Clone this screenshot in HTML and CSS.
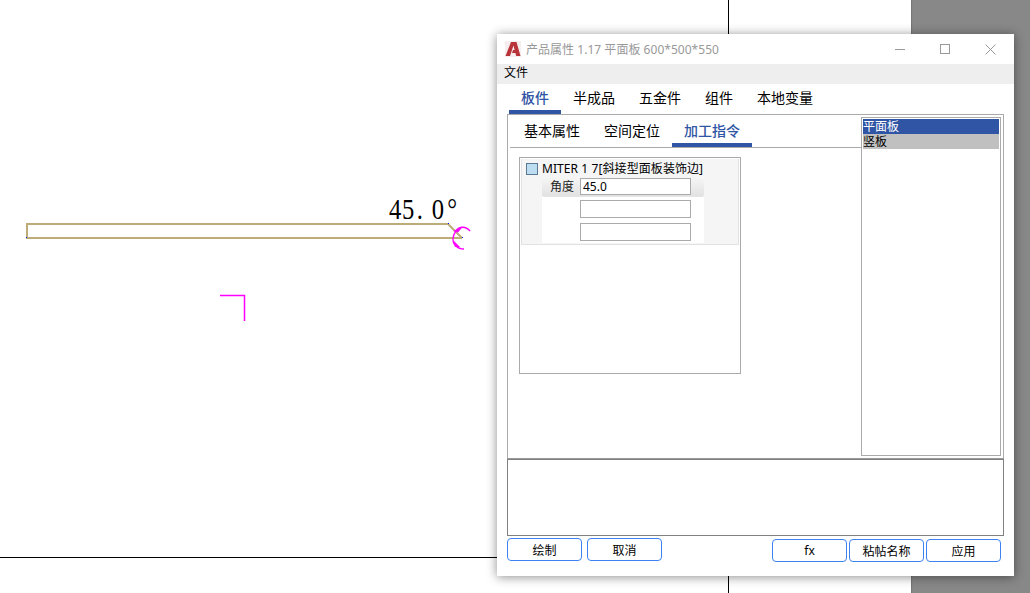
FILE: index.html
```html
<!DOCTYPE html>
<html>
<head>
<meta charset="utf-8">
<title>产品属性</title>
<link rel="stylesheet" href="styles.css">
</head>
<body>
<div class="desktop">
	<svg class="drawing" width="911" height="593" viewBox="0 0 911 593">
		<line x1="728.5" y1="0" x2="728.5" y2="593" stroke="#000"/>
		<line x1="0" y1="557.5" x2="911" y2="557.5" stroke="#000"/>
		<path d="M448 224H27V238H462M448 224L462 238" fill="none" stroke="#bdac78" stroke-width="2"/>
		<rect x="26" y="237" width="1" height="1" fill="#00f"/>
		<rect x="448" y="223" width="1" height="1" fill="#00f"/>
		<rect x="462" y="237" width="1" height="1" fill="#00f"/>
		<text class="dim" transform="translate(389 219) scale(.82 1)" x="0 16 34 52 71" y="0">45.0°</text>
		<path d="M470 231C466 226 459 226 456 231C452 236 452 243 456 246C458 248 461 249 464 249" fill="none" stroke="#f0f" stroke-width="1.300"/>
		<path d="M463 226.500L453 231L458 232.500ZM453 240L460 247L455 247Z" fill="#f0f"/>
		<path d="M220 295.500H244.500V321" fill="none" stroke="#f0f" stroke-width="1.500"/>
	</svg>
	<div class="dialog">
		<div class="titlebar">
			<svg class="logo" width="16" height="16" viewBox="0 0 16 16">
				<rect width="16" height="16" fill="#f6eeee"/>
				<path d="M6 1H11.500L15.500 15H11.200L10.400 12H7L8 9H9.600L8.500 4.500L5 15H0.500Z" fill="#b9343a"/>
			</svg>
			<span class="title">产品属性 1.17 平面板 600*500*550</span>
			<div class="winbtns">
				<svg width="10" height="10" viewBox="0 0 10 10"><line x1="0" y1="5.500" x2="10" y2="5.500" stroke="#999"/></svg>
				<svg width="10" height="10" viewBox="0 0 10 10"><rect x="0.500" y="0.500" width="9" height="9" fill="none" stroke="#999"/></svg>
				<svg width="11" height="11" viewBox="0 0 11 11"><path d="M0.500 0.500L10.500 10.500M10.500 0.500L0.500 10.500" stroke="#999" fill="none"/></svg>
			</div>
		</div>
		<div class="menubar">文件</div>
		<div class="tabs">
			<span class="tab active">板件</span>
			<span class="tab">半成品</span>
			<span class="tab">五金件</span>
			<span class="tab">组件</span>
			<span class="tab">本地变量</span>
		</div>
		<div class="panel">
			<div class="left">
				<div class="subtabs">
					<span class="tab">基本属性</span>
					<span class="tab">空间定位</span>
					<span class="tab active">加工指令</span>
				</div>
				<div class="tree">
					<div class="group">
						<div class="group-head"><i class="check"></i>MITER 1 7[斜接型面板装饰边]</div>
						<div class="params">
							<div class="param first"><label>角度</label><input type="text" value="45.0"></div>
							<div class="param"><label></label><input type="text"></div>
							<div class="param"><label></label><input type="text"></div>
						</div>
					</div>
				</div>
			</div>
			<ul class="list">
				<li class="sel">平面板</li>
				<li class="alt">竖板</li>
			</ul>
		</div>
		<div class="output"></div>
		<div class="buttons">
			<button>绘制</button>
			<button>取消</button>
			<span class="spacer"></span>
			<button class="low">fx</button>
			<button class="low">粘帖名称</button>
			<button class="low">应用</button>
		</div>
	</div>
</div>
</body>
</html>
```

FILE: styles.css
```css
* { margin: 0; padding: 0; box-sizing: border-box; }
html, body { width: 1030px; height: 593px; overflow: hidden; }
body { font-family: "Noto Sans", "Noto Sans CJK SC", sans-serif; font-size: 12px; color: #000; }

.desktop { position: relative; width: 1030px; height: 593px; background: #888; }
.drawing { position: absolute; left: 0; top: 0; background: #fff; box-shadow: 1px 0 1px #777; }
.dim { font-family: "Liberation Serif", serif; font-size: 30px; fill: #000; }

.dialog { position: absolute; left: 497px; top: 34px; width: 517px; height: 542px; background: #fff; display: flex; flex-direction: column; box-shadow: 0 1px 10px rgba(0,0,0,.45); }

.titlebar { height: 30px; display: flex; align-items: center; padding-left: 8px; }
.logo { margin-right: 5px; }
.title { color: #999; font-size: 12px; flex: 1; letter-spacing: .03px; }
.winbtns { display: flex; align-items: center; gap: 35px; padding-right: 18px; }

.menubar { height: 20px; line-height: 18px; background: #eee; padding-left: 7px; font-size: 12px; }

.tabs { height: 30px; display: flex; padding-left: 12px; }
.tab { height: 100%; padding: 0 12px; font-size: 14px; line-height: 28px; border-bottom: 4px solid transparent; }
.tab.active { color: #2f55a4; font-weight: 500; border-bottom-color: #2f55a4; }

.panel { margin-left: 10px; width: 497px; height: 345px; border: 1px solid #aaa; border-bottom-color: #999; display: flex; padding: 2px 2px 2px 0; }
.left { flex: 1; }
.subtabs { height: 31px; display: flex; margin-left: 2px; padding-left: 2px; border-bottom: 1px solid #aaa; }
.tree { margin: 9px 0 0 11px; width: 222px; height: 217px; border: 1px solid #aaa; padding: 1px; }
.group { height: 86px; background: #f5f5f5; border: 1px solid #e2e2e2; border-top: 0; }
.group-head { height: 18px; line-height: 18px; padding: 1px 0 0 4px; display: flex; align-items: center; white-space: nowrap; letter-spacing: .08px; }
.check { width: 12px; height: 12px; background: #bcdcf0; border: 1px solid #5a7a94; margin-right: 4px; }
.params { margin-left: 20px; width: 162px; height: 66px; background: #fff; }
.param { height: 23px; display: flex; align-items: flex-start; padding-top: 3px; }
.param.first { height: 20px; padding-top: 1px; background: linear-gradient(#f6f6f6, #e2e2e2); border: 1px solid #e4e4e4; border-width: 0 0 1px; border-radius: 2px; }
.param label { width: 38px; text-align: right; padding-right: 6px; color: #222; line-height: 18px; }
.param input { width: 111px; height: 18px; border: 1px solid #aaa; padding-left: 2px; font: inherit; font-size: 12px; color: #000; outline: none; background: #fff; }
.param.first input { height: 17px; }

.list { width: 140px; height: 339px; border: 1px solid #aaa; padding: 1px 1px; list-style: none; font-size: 12px; line-height: 15px; }
.list li { height: 15px; padding-left: 0; }
.sel { background: #2f55a4; color: #fff; }
.alt { background: #c0c0c0; }

.output { margin: 0 0 0 10px; width: 497px; height: 77px; border: 1px solid #808080; background: #fff; }

.buttons { display: flex; margin: 2px 0 0 10px; width: 494px; align-items: flex-start; }
.buttons button { width: 75px; height: 23px; border: 1px solid #3c82f0; border-radius: 4px; background: #fff; font: inherit; font-size: 12px; margin-right: 5px; color: #000; }
.buttons .spacer { flex: 1; }
.buttons .low { margin: 1px 0 0 2px; }
```
